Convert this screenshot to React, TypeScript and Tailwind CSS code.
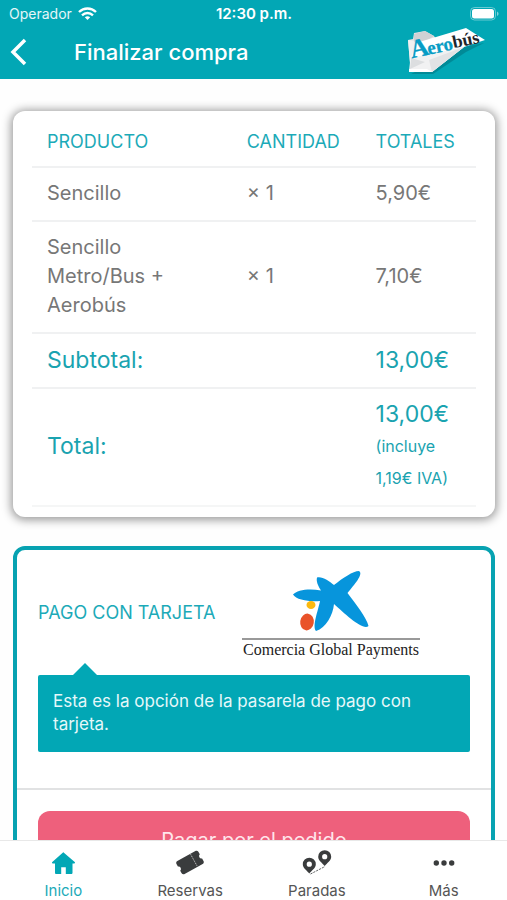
import type { ReactNode } from 'react'

type Item = { name: string; qty: number; total: string }
type Tab = { label: string; icon: ReactNode; active?: boolean }

const items: Item[] = [
  { name: 'Sencillo', qty: 1, total: '5,90€' },
  { name: 'Sencillo Metro/Bus + Aerobús', qty: 1, total: '7,10€' },
]

const tabs: Tab[] = [
  { label: 'Inicio', icon: <HomeIcon />, active: true },
  { label: 'Reservas', icon: <TicketIcon /> },
  { label: 'Paradas', icon: <StopsIcon /> },
  { label: 'Más', icon: <MoreIcon /> },
]

function HomeIcon() {
  return (
    <svg className="h-7 w-8" viewBox="0 0 32 28" fill="currentColor" aria-hidden="true">
      <path d="M16.600 3.500 27.700 13c.6.600.3 1.400-.5 1.400h-1.700v9.300c0 .8-.5 1.300-1.300 1.300h-5.400v-6.700h-4.600V25H9.300c-.8 0-1.300-.5-1.300-1.300v-9.300H5.800c-.8 0-1.100-.8-.5-1.400l10.700-9.500c.2-.2.4-.2.600 0z" />
    </svg>
  )
}

function TicketIcon() {
  return (
    <svg className="h-7 w-8" viewBox="0 0 32 28" aria-hidden="true">
      <g transform="rotate(-29 16 13.500)">
        <path
          fill="currentColor"
          d="M5.700 6h20.600c1.300 0 2.200.9 2.200 2.200v2.900a2.500 2.500 0 0 0 0 4.800v2.900c0 1.300-.9 2.200-2.200 2.200H5.700c-1.300 0-2.200-.9-2.200-2.200v-2.900a2.500 2.500 0 0 0 0-4.800V8.200C3.500 6.900 4.400 6 5.700 6z"
        />
        <path d="M20.500 6.500v14" stroke="#fff" strokeOpacity=".7" strokeWidth=".8" strokeDasharray="1.300 .7" />
      </g>
    </svg>
  )
}

function StopsIcon() {
  return (
    <svg className="h-7 w-8" viewBox="0 0 32 28" aria-hidden="true">
      <g fill="currentColor" fillRule="evenodd">
        <path d="M8.300 8.700a6.500 6.500 0 0 0-6.500 6.500c0 3.900 4.300 6.400 6.500 9.200 2.200-2.800 6.500-5.300 6.500-9.200a6.500 6.500 0 0 0-6.500-6.500zm0 3.900a2.600 2.600 0 1 1 0 5.200 2.600 2.600 0 0 1 0-5.200z" />
        <path d="M23.700 1.200a6.500 6.500 0 0 0-6.500 6.500c0 3.900 4.300 6.400 6.500 9.200 2.200-2.800 6.500-5.300 6.500-9.200a6.500 6.500 0 0 0-6.500-6.500zm0 3.900a2.600 2.600 0 1 1 0 5.200 2.600 2.600 0 0 1 0-5.200z" />
      </g>
      <path d="M9.500 25 24 17.500" stroke="currentColor" strokeWidth=".8" strokeDasharray="2.200 1" />
    </svg>
  )
}

function MoreIcon() {
  return (
    <svg className="h-7 w-8" viewBox="0 0 32 28" fill="currentColor" aria-hidden="true">
      <circle cx="8.300" cy="14" r="2.700" />
      <circle cx="16" cy="14" r="2.700" />
      <circle cx="23.700" cy="14" r="2.700" />
    </svg>
  )
}

function AerobusLogo() {
  return (
    <svg className="h-12 w-20" viewBox="0 0 80 48" role="img" aria-label="Aerobús">
      <path d="M4 46h22l33-22 18-9-20 4z" fill="#006e79" opacity=".5" />
      {/* pliegues traseros */}
      <path d="M1 12 6 11l1-6 11-2 9 5 4 6L12 30l-9 5z" fill="#e3e4e6" />
      <path d="M7 6l11-3 9 5-8 5-12 2z" fill="#cfd1d4" />
      <path d="M1 12l6 1 3 5-7 17z" fill="#f0f0f1" />
      {/* ala */}
      <path d="M4 30 9 15 59 0l19 12-21 7-32 25H2l1-10z" fill="#fff" />
      <path d="M4 30l53-11-32 25H3z" fill="#f1f1f2" />
      <path d="M4 30l14 4L3 41z" fill="#dcdee0" />
      <path d="M22 32l35-13-32 25z" fill="#e2e3e5" />
      <path d="M2 41h18l5 3H2z" fill="#fff" />
      <g transform="rotate(-12 6 31)" fontFamily="Liberation Serif, serif" fontWeight="700" strokeWidth=".3">
        <text x="5" y="30" fontSize="26" fill="#069cc5" stroke="#069cc5">A</text>
        <text x="22" y="30" fontSize="19" fill="#069cc5" stroke="#069cc5">ero</text>
        <text x="48" y="29" fontSize="18" fill="#20252a">bús</text>
      </g>
    </svg>
  )
}

function StatusBar() {
  return (
    <div className="grid h-7 grid-cols-3 items-center pr-2 pl-[9px] text-sm">
      <div className="flex items-center gap-1.5 text-white/90">
        Operador
        <svg className="h-3.5 w-[19px]" viewBox="0 0 19 14" fill="none" stroke="#fff" strokeWidth="2.400" aria-hidden="true">
          <path d="M1 5c4.900-4.700 12.100-4.700 17 0" />
          <path d="M4 8.300c3.200-3 7.800-3 11 0" />
          <path d="M6.800 10.300 9.500 13l2.700-2.700c-1.600-1.400-3.800-1.400-5.400 0z" fill="#fff" stroke="none" />
        </svg>
      </div>
      <div className="text-center text-[15px] font-semibold">12:30 p.m.</div>
      <svg className="h-3.5 w-[30px] justify-self-end" viewBox="0 0 30 14" aria-hidden="true">
        <rect x="1.500" y=".5" width="25" height="12.500" rx="4" fill="none" stroke="#fff" strokeOpacity=".4" />
        <rect x="3" y="2" width="22" height="9.500" rx="2.500" fill="#fff" />
        <path d="M28 4.500c2 .8 2 3.700 0 4.500z" fill="#fff" fillOpacity=".5" />
      </svg>
    </div>
  )
}

function OrderTable() {
  return (
    <section className="rounded-xl bg-white px-[19px] pt-[6px] pb-[10px] shadow-[0_1px_10px_2px_rgba(0,0,0,0.4)]">
      <table className="w-full table-fixed text-left text-xl leading-[29px] text-[#777]">
        <colgroup>
          <col className="w-[45%]" />
          <col className="w-[29%]" />
          <col className="w-[26%]" />
        </colgroup>
        <thead className="text-lg leading-[26px] text-[#1caab8]">
          <tr className="border-b-2 border-[#f0f1f2]">
            <th scope="col" className="pt-3 pb-[11px] pl-[15px] font-normal">PRODUCTO</th>
            <th scope="col" className="pt-3 pb-[11px] pl-[15px] font-normal">CANTIDAD</th>
            <th scope="col" className="pt-3 pb-[11px] pl-[15px] font-normal">TOTALES</th>
          </tr>
        </thead>
        <tbody>
          {items.map((item) => (
            <tr key={item.name} className="border-b-2 border-[#f0f1f2]">
              <td className="pt-[11px] pr-12 pb-3 pl-[15px]">{item.name}</td>
              <td className="pt-[11px] pb-3 pl-[15px]">× {item.qty}</td>
              <td className="pt-[11px] pb-3 pl-[15px]">{item.total}</td>
            </tr>
          ))}
        </tbody>
        <tfoot className="text-[23px] leading-[30px] text-[#1aa3b0]">
          <tr className="border-b-2 border-[#f0f1f2]">
            <th scope="row" colSpan={2} className="pt-[11px] pb-3 pl-[15px] font-normal">Subtotal:</th>
            <td className="pt-[11px] pb-3 pl-[15px]">13,00€</td>
          </tr>
          <tr className="border-b-2 border-[#f5f6f6]">
            <th scope="row" colSpan={2} className="pt-[9px] pb-[11px] pl-[15px] font-normal">Total:</th>
            <td className="pt-[9px] pb-[11px] pl-[15px] leading-8">
              13,00€
              <small className="block text-base leading-8">(incluye 1,19€ IVA)</small>
            </td>
          </tr>
        </tfoot>
      </table>
    </section>
  )
}

function PaymentCard() {
  return (
    <section className="mt-[29px] rounded-xl border-4 border-[#07a2b1] bg-white pb-6">
      <div className="flex items-center px-[21px] pt-4">
        <h2 className="text-lg text-[#1caab8]">PAGO CON TARJETA</h2>
        <figure className="mr-[50px] ml-auto flex flex-col items-center">
          <svg className="h-[74px] w-[178px]" viewBox="0 0 178 74" aria-hidden="true">
            <path
              fill="#0795dc"
              d="M51 28.500C55 24 67 22 79 24.500C76 20 74 15 75 11.500C80 10 87 15 92 19C101 12 111 5 117 5C122 8 112 19 105.500 27C113 37 125 52 126.500 60C121 65 103 48 92 38C91 49 84 62 74 65C70 60 76 45 78 35C68 36 54 34 51 28.500Z"
            />
            <ellipse cx="69" cy="39" rx="4.500" ry="4" fill="#fbb90f" />
            <ellipse cx="65" cy="56" rx="6.800" ry="8.400" fill="#e9532a" transform="rotate(8 65 56)" />
            <path d="M0 73h178" stroke="#999" strokeWidth="2" />
          </svg>
          <figcaption className="font-['Liberation_Serif',serif] text-base leading-5 whitespace-nowrap text-[#222]">
            Comercia Global Payments
          </figcaption>
        </figure>
      </div>

      {/* aviso de la pasarela */}
      <div className="relative mx-[21px] mt-[15px] rounded-xs bg-[#02a7b5] px-[15px] pt-[15px] pb-4 text-[17px] leading-[23px] text-[#e6f8fa]">
        <svg className="absolute -top-3 left-[34px] h-[13px] w-[26px]" viewBox="0 0 26 13" fill="#02a7b5" aria-hidden="true">
          <path d="M0 13 13 0l13 13z" />
        </svg>
        Esta es la opción de la pasarela de pago con tarjeta.
      </div>

      <hr className="mt-9 border-t-2 border-[#e1e2e3]" />
      <div className="px-[21px] pt-[21px]">
        <button type="button" className="w-full rounded-xl bg-[#ee607c] py-[14px] text-xl leading-[30px] text-[#ffe6eb]">
          Pagar por el pedido
        </button>
      </div>
    </section>
  )
}

export default function App() {
  return (
    <div className="flex h-screen flex-col bg-[#fefefe] font-['Inter',sans-serif]">
      <header className="h-[79px] shrink-0 bg-[#02a7b5] text-white">
        <StatusBar />
        <div className="flex items-center pr-5 pl-[9px]">
          <button type="button" aria-label="Volver" className="w-[65px]">
            <svg className="h-7 w-5" viewBox="0 0 20 28" fill="none" stroke="currentColor" strokeWidth="3.500" aria-hidden="true">
              <path d="M16 2 4 14l12 12" />
            </svg>
          </button>
          <h1 className="flex-1 text-[22px] font-medium">Finalizar compra</h1>
          <AerobusLogo />
        </div>
      </header>

      <main className="min-h-0 flex-1 overflow-y-auto pt-8 pr-3 pb-6 pl-[13px] [scrollbar-width:none]">
        <OrderTable />
        <PaymentCard />
      </main>

      <nav className="grid shrink-0 grid-cols-4 border-t border-[#e8e8e8] bg-white pt-2 text-[15px] text-[#555]">
        {tabs.map((tab) => (
          <a
            key={tab.label}
            href="#"
            className={`flex flex-col items-center gap-[5px] leading-[18px] ${tab.active ? 'text-[#1caab8]' : ''}`}
          >
            <span className={tab.active ? 'text-[#02a7b5]' : 'text-[#3a3c3d]'}>{tab.icon}</span>
            {tab.label}
          </a>
        ))}
      </nav>
    </div>
  )
}
